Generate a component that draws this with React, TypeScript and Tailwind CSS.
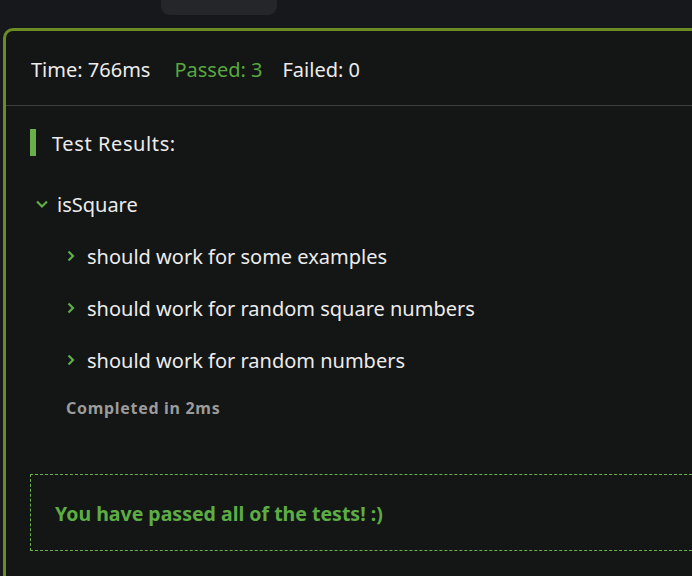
import React from "react";

const font = { fontFamily: '"Noto Sans", "Open Sans", sans-serif' };

function Chevron({ down }: { down?: boolean }) {
  return (
    <svg width="12" height="12" viewBox="0 0 12 12" className="shrink-0">
      {down ? (
        <path d="M1 3.5l5 5 5-5" fill="none" stroke="#5fae45" strokeWidth="2.2" />
      ) : (
        <path d="M2.5 1.5l4.5 4.5-4.5 4.5" fill="none" stroke="#5fae45" strokeWidth="2.2" />
      )}
    </svg>
  );
}

const tests = [
  "should work for some examples",
  "should work for random square numbers",
  "should work for random numbers",
];

export default function App() {
  return (
    <div className="w-[692px] h-[576px] overflow-hidden bg-[#17181c] text-[#ececec]" style={font}>
      <div className="ml-[161px] w-[116px] h-[15px] rounded-b-[9px] bg-[#25262a]" />
      <div className="mt-[13px] ml-[3px] h-[560px] border-l-[3px] border-t-[3px] border-[#6b8c22] rounded-tl-[10px] bg-[#141515]">
        <div className="h-[75px] pt-[3px] flex items-center pl-[25px] border-b border-[#3c3d3d] text-[20px]">
          <span>Time: 766ms</span>
          <span className="ml-[24px] text-[#58a83f]">Passed: 3</span>
          <span className="ml-[20px]">Failed: 0</span>
        </div>
        <div className="pl-[24px] pt-[23px]">
          <div className="flex items-center gap-4 h-[27px]">
            <div className="w-[6px] h-[27px] bg-[#69b04a]" />
            <span className="text-[20px] tracking-[0.6px] pt-[2px]">Test Results:</span>
          </div>
          <div className="mt-[33px] ml-[6px] pt-[2px] flex items-center gap-[9px] text-[20px] h-[28px]">
            <Chevron down />
            <span className="pt-[1px]">isSquare</span>
          </div>
          <div className="ml-[36px]">
            {tests.map((t) => (
              <div key={t} className="mt-[24px] pt-[2px] flex items-center gap-[9px] text-[20px] h-[28px]">
                <Chevron />
                <span className="pt-[1px]">{t}</span>
              </div>
            ))}
            <div className="mt-[24px] h-[20px] pt-[2px] flex items-center text-[16px] font-bold text-[#9b9b9b] tracking-[0.7px]">
              Completed in 2ms
            </div>
          </div>
          <div className="mt-[57px] h-[77px] pt-[3px] border border-dashed border-[#6ab04c] border-r-0 flex items-center pl-[24px]">
            <span className="text-[19.5px] font-bold text-[#5cad44]">You have passed all of the tests! :)</span>
          </div>
        </div>
      </div>
    </div>
  );
}
